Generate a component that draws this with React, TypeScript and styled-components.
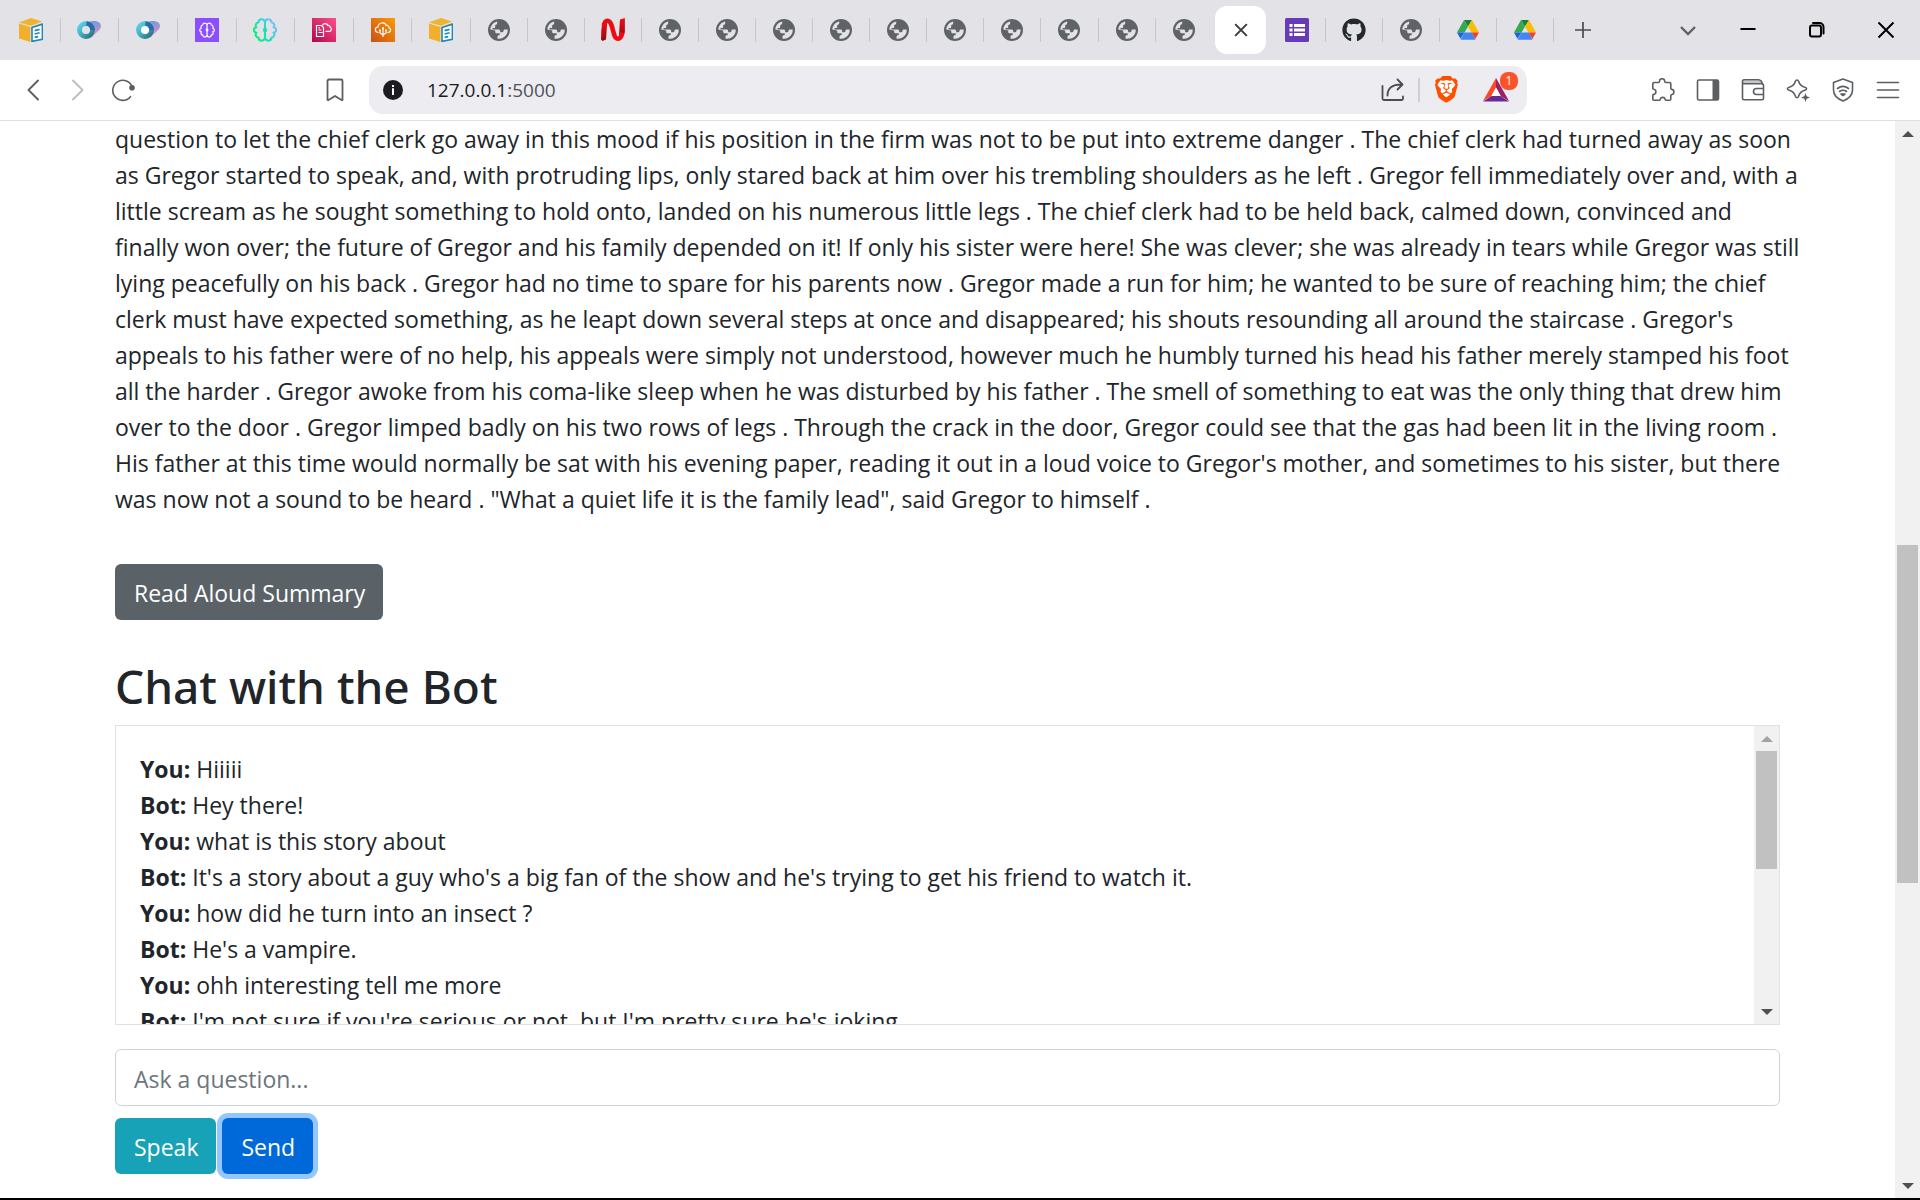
import React from "react";
import styled, { createGlobalStyle } from "styled-components";
import { FaGithub } from "react-icons/fa";
import { SiBrave } from "react-icons/si";

const GlobalStyle = createGlobalStyle`
  *, *::before, *::after { box-sizing: border-box; }
  body {
    margin: 0;
    background: #fff;
    color: #212529;
    font-family: "Segoe UI", "Open Sans", "Noto Sans", sans-serif;
    font-size: 23px;
    line-height: 36px;
  }
  button, input { font: inherit; }
`;

const Window = styled.div`
  display: flex;
  flex-direction: column;
  height: 100vh;
  overflow: hidden;
  border-bottom: 2px solid #000;
`;

/* ---------- tab strip ---------- */

const TabStrip = styled.header`
  display: flex;
  flex: none;
  align-items: center;
  height: 60px;
  padding: 0 0 0 2px;
  background: #e3e2e7;
`;

const PinnedTabs = styled.div`
  display: flex;
  flex: 0 1 469px;
`;

const OpenTabs = styled.div`
  display: flex;
  flex: 0 1 1083px;
`;

const Tab = styled.button<{ $divider?: boolean }>`
  display: flex;
  flex: 1;
  align-items: center;
  justify-content: center;
  height: 24px;
  padding: 0;
  border: 0;
  border-right: 1px solid ${(p) => (p.$divider ? "#c6c6cb" : "transparent")};
  background: none;
`;

const ActiveTab = styled.div`
  display: flex;
  flex: 1;
  justify-content: center;
  margin: -12px 0;
`;

const ActiveTabButton = styled.button`
  display: flex;
  align-items: center;
  justify-content: center;
  width: 51px;
  height: 48px;
  padding: 0;
  border: 0;
  border-radius: 12px;
  background: #fff;
  color: #3b3d42;
`;

const StripButton = styled.button`
  display: flex;
  align-items: center;
  justify-content: center;
  width: 58px;
  height: 48px;
  padding: 0;
  border: 0;
  background: none;
  color: #4b4d52;
`;

const WindowControls = styled.div`
  display: flex;
  margin-left: auto;
`;

const ControlButton = styled(StripButton)<{ $dim?: boolean }>`
  width: ${(p) => (p.$dim ? "51px" : "69px")};
  color: ${(p) => (p.$dim ? "#606268" : "#000")};
`;

/* ---------- toolbar ---------- */

const Toolbar = styled.nav`
  display: grid;
  flex: none;
  grid-template-columns: 369px minmax(0, 1fr) 393px;
  align-items: center;
  height: 61px;
  border-bottom: 1px solid #dfdfe3;
  background: #fff;
`;

const ToolGroup = styled.div<{ $end?: boolean }>`
  display: flex;
  justify-content: ${(p) => (p.$end ? "flex-end" : "flex-start")};
  padding: 0 ${(p) => (p.$end ? "10px" : "12px")} 0 10px;
`;

const ToolButton = styled.button<{ $faded?: boolean; $push?: boolean }>`
  display: flex;
  align-items: center;
  justify-content: center;
  width: 45px;
  height: 45px;
  margin-left: ${(p) => (p.$push ? "auto" : "0")};
  padding: 0;
  border: 0;
  background: none;
  color: ${(p) => (p.$faded ? "#bcbdc0" : "#5b5e63")};
`;

const AddressBar = styled.div`
  display: flex;
  align-items: center;
  height: 48px;
  padding: 0 6px 0 14px;
  border-radius: 14px;
  background: #edecf1;
`;

const UrlText = styled.div`
  flex: 1;
  min-width: 0;
  padding-left: 24px;
  color: #1b1b20;
  font-size: 19px;
  line-height: 28px;
`;

const Port = styled.span`
  color: #505258;
`;

const BarButton = styled.button<{ $wide?: boolean }>`
  position: relative;
  display: flex;
  align-items: center;
  justify-content: center;
  width: ${(p) => (p.$wide ? "48px" : "50px")};
  height: 48px;
  padding: 0;
  border: 0;
  background: none;
  color: #4a4c51;
`;

const BarDivider = styled.span`
  width: 2px;
  height: 24px;
  margin-right: 3px;
  background: #cfced4;
`;

const RewardBadge = styled.span`
  position: absolute;
  top: 6px;
  right: 3px;
  width: 18px;
  height: 18px;
  border-radius: 8px;
  background: #fb542b;
  color: #fff;
  font-size: 12px;
  line-height: 18px;
  text-align: center;
`;

/* ---------- page ---------- */

const Viewport = styled.div`
  display: flex;
  flex: 1;
  min-height: 0;
`;

const Page = styled.main`
  flex: 1;
  min-width: 0;
  overflow: hidden;
  padding: 0 24px;
`;

const Container = styled.div`
  max-width: 1665px;
  margin: 0 auto;
`;

const Summary = styled.p`
  margin: 0 0 47px;
`;

const Line = styled.span`
  display: block;
  white-space: nowrap;
`;

const tones = {
  grey: "#5a6268",
  teal: "#17a2b8",
  blue: "#0069d9",
};

const Button = styled.button<{ $tone: keyof typeof tones; $focused?: boolean }>`
  height: 56px;
  padding: 2px 18px 0 19px;
  border: 0;
  border-radius: 6px;
  background: ${(p) => tones[p.$tone]};
  box-shadow: ${(p) => (p.$focused ? "0 0 0 5px #94c6ff" : "none")};
  color: #fff;
`;

const Heading = styled.h2`
  margin: 37px 0 10px;
  font-family: "Segoe UI", "Noto Sans", sans-serif;
  font-size: 46px;
  font-weight: 500;
  line-height: 58px;
`;

const ChatBox = styled.section`
  display: flex;
  height: 300px;
  margin-bottom: 24px;
  overflow: hidden;
  border: 1px solid #dee2e6;
`;

const Messages = styled.div`
  flex: 1;
  min-width: 0;
  padding: 25px 24px;
`;

const Message = styled.div`
  white-space: nowrap;
`;

const QuestionInput = styled.input`
  display: block;
  width: 100%;
  height: 57px;
  margin-bottom: 12px;
  padding: 2px 18px 0;
  border: 1px solid #ced4da;
  border-radius: 6px;
  background: #fff;
  color: #495057;

  &::placeholder {
    color: #6c757d;
    opacity: 1;
  }
`;

const Actions = styled.div`
  display: flex;
  gap: 6px;
`;

/* ---------- scroll bars ---------- */

const ScrollTrack = styled.div`
  display: flex;
  flex: none;
  flex-direction: column;
  width: 25px;
  background: #f1f1f1;
`;

const ScrollArrow = styled.span<{ $down?: boolean; $off?: boolean }>`
  display: flex;
  flex: none;
  align-items: center;
  justify-content: center;
  height: 25px;

  &::before {
    content: "";
    border: 6px solid transparent;
    border-width: ${(p) => (p.$down ? "6px 6px 0" : "0 6px 6px")};
    border-${(p) => (p.$down ? "top" : "bottom")}-color: ${(p) => (p.$off ? "#a3a3a3" : "#505050")};
  }
`;

const ScrollSpace = styled.span<{ $share: number }>`
  flex: ${(p) => p.$share} 0 0;
`;

const ScrollThumb = styled(ScrollSpace)`
  margin: 0 2px;
  background: #c1c1c1;
`;

function ScrollBar(props: { before: number; thumb: number; after: number }) {
  return (
    <ScrollTrack aria-hidden="true">
      <ScrollArrow $off={props.before === 0} />
      <ScrollSpace $share={props.before} />
      <ScrollThumb $share={props.thumb} />
      <ScrollSpace $share={props.after} />
      <ScrollArrow $down />
    </ScrollTrack>
  );
}

/* ---------- icons ---------- */

const Svg = (p: React.SVGProps<SVGSVGElement>) => (
  <svg width="24" height="24" viewBox="0 0 24 24" fill="none" aria-hidden="true" {...p} />
);

const stroke = {
  stroke: "currentColor",
  strokeWidth: 1.6,
  strokeLinecap: "round" as const,
  strokeLinejoin: "round" as const,
};

const BoxIcon = () => (
  <Svg>
    <path d="M0 4.5 12 0l11 3.6-11 4.2z" fill="#f0b42c" />
    <path d="M0 5.6 11.4 9v15L0 20.5z" fill="#f2b02a" />
    <path d="M12.6 9 23 5v6l-10.4 2z" fill="#e5a41f" />
    <path d="m13 9.6 10.4-3.4v15L13 23.4z" fill="#fff" stroke="#1b87c2" strokeWidth="1.6" />
    <path d="m15.6 12.6 5-1.2M15.6 16l5-1.2M15.6 19.4l3.6-.8" stroke="#1b87c2" strokeWidth="1.6" />
  </Svg>
);

const RingIcon = ({ id, center }: { id: string; center: string }) => (
  <Svg>
    <defs>
      <linearGradient id={`${id}a`} x1="0" y1="0" x2="0" y2="1">
        <stop offset="0" stopColor="#6f9fd8" />
        <stop offset=".5" stopColor="#b98fd0" />
        <stop offset="1" stopColor="#f0b9a8" />
      </linearGradient>
      <linearGradient id={`${id}b`} x1="0" y1="0" x2="1" y2="1">
        <stop offset="0" stopColor="#5bd3ea" />
        <stop offset=".45" stopColor="#45b0c4" />
        <stop offset="1" stopColor="#2a6f80" />
      </linearGradient>
    </defs>
    <path d="M11 4.5c4-2 9-1.800 11.500.300 2 1.800 1.900 5-.300 7.200L14 20z" fill={`url(#${id}a)`} />
    <circle cx="9" cy="12" r="6.5" stroke={`url(#${id}b)`} strokeWidth="5" fill={center} />
    <path d="M9.5 5.5a6.5 6.5 0 0 1 6 6.5" stroke="#2b6ba6" strokeWidth="4.6" />
  </Svg>
);

const brain =
  "M12 5C12.5 1.5 17.5 1.300 18 5C20.500 5.500 21 8 20 9.500C23 10.500 23 13.500 20 14.500C21 16 20.500 18.500 18 19C17.500 22.700 12.500 22.500 12 19C11.500 22.500 6.500 22.700 6 19C3.500 18.500 3 16 4 14.500C1 13.500 1 10.500 4 9.500C3 8 3.500 5.500 6 5C6.500 1.300 11.500 1.500 12 5zM12 5v14";

const BrainTileIcon = () => (
  <Svg>
    <rect width="24" height="24" fill="#8c4fff" />
    <g transform="translate(3.400 3.400) scale(.72)">
      <path d={brain} stroke="#fff" strokeWidth="1.7" />
      <circle cx="12" cy="12" r="2" fill="#fff" />
    </g>
  </Svg>
);

const BrainIcon = () => (
  <Svg>
    <defs>
      <linearGradient id="brain" x1="0" y1=".8" x2="1" y2=".2">
        <stop offset="0" stopColor="#06f26c" />
        <stop offset=".5" stopColor="#23dcc8" />
        <stop offset="1" stopColor="#7fbcff" />
      </linearGradient>
    </defs>
    <g transform="translate(-1.200 -1.200) scale(1.100)">
      <path d={brain} stroke="url(#brain)" strokeWidth="1.9" />
      <circle cx="12" cy="12" r="2" fill="#23dcb0" />
    </g>
  </Svg>
);

const CloudDocIcon = () => (
  <Svg>
    <defs>
      <linearGradient id="pink" x1="0" y1="1" x2="1" y2="0">
        <stop offset="0" stopColor="#b0084d" />
        <stop offset="1" stopColor="#ff4f8b" />
      </linearGradient>
    </defs>
    <rect width="24" height="24" fill="url(#pink)" />
    <path d="M4.500 7.500h5l2 2v9h-7zM6.500 12h3M6.500 14.500h4M6.500 9.800h1.500M10.500 7.300c.8-2.300 4.600-2.500 5.300.2 1.600-.3 2.500.7 2.400 1.800 1.800.8 1.400 4-.9 4h-3.800" stroke="#fff" strokeWidth="1.2" />
  </Svg>
);

const CloudTreeIcon = () => (
  <Svg>
    <defs>
      <linearGradient id="orange" x1="0" y1="1" x2="1" y2="0">
        <stop offset="0" stopColor="#c8511b" />
        <stop offset="1" stopColor="#ff9900" />
      </linearGradient>
    </defs>
    <rect width="24" height="24" fill="url(#orange)" />
    <path d="M7.500 14.500C3.300 14.400 3.500 9.200 7 9c.4-4.800 7-5.300 8.200-1.500 1.800-.5 2.800.7 2.700 2.200 2.600.8 2.200 4.800-1.400 4.800M12 19V10M12 17l-3-2v-2.500M12 17l3-2v-2.500" stroke="#fff" strokeWidth="1.2" />
    <circle cx="12" cy="10" r="1" fill="#fff" />
    <circle cx="9" cy="12.300" r="1" fill="#fff" />
    <circle cx="15" cy="12.300" r="1" fill="#fff" />
  </Svg>
);

const GlobeIcon = () => (
  <Svg>
    <circle cx="12" cy="12" r="11" fill="#5f6368" />
    <path d="M3.300 11.500C3.600 7.500 6.400 4.300 10.200 3.500V5c0 1.100-.8 2-2 2v2c0 .6-.4 1-1 1H5.500v1.500h6c1 0 1.700.7 1.700 1.700v1h2c.9 0 1.300-.6 1.300-1.400 0-.8.600-1.300 1.400-1.300h2.800a8.800 8.800 0 0 1-10.200 9.200v-2c0-.8.6-1.400 1.400-1.400.5 0 .8-.4.8-.9v-1.100H9.800c-.9 0-1.600-.7-1.600-1.600v-1.200z" fill="#e3e2e7" />
  </Svg>
);

const RibbonIcon = () => (
  <Svg>
    <defs>
      <linearGradient id="ribbon" x1="0" y1="0" x2="0" y2="1">
        <stop offset="0" stopColor="#f20d16" />
        <stop offset="1" stopColor="#8e0a12" />
      </linearGradient>
    </defs>
    <path d="M0 21.500c.6-6-.4-11 1.800-16l4.400-1L5 21.500 1.500 23z" fill="url(#ribbon)" />
    <path d="M19 1.500 23.900 0v14l-2.500 6-3.400-3z" fill="url(#ribbon)" />
    <path d="M2.800 8C4 1.300 8.600.8 10.800 8l2 7.500c1.600 6.800 6.800 7.500 8.600-1" stroke="#ee0b14" strokeWidth="4.6" />
  </Svg>
);

const FormsIcon = () => (
  <Svg>
    <rect width="24" height="24" rx="1.5" fill="#673ab7" />
    <path d="M4.500 6h3v3h-3zM9 6h11v3H9zM4.500 10.500h3v3h-3zM9 10.500h11v3H9zM4.500 15h3v3h-3zM9 15h11v3H9z" fill="#fff" />
  </Svg>
);

const DriveIcon = () => (
  <Svg>
    <path d="M8 2h8l-4 6.500z" fill="#188038" />
    <path d="M8 2 1 14.500h7.500L12 8.500z" fill="#34a853" />
    <path d="m16 2 7 12.500h-7.500L12 8.500z" fill="#fbbc04" />
    <path d="m1 14.500 3.500 6.300L8.500 14.500z" fill="#1967d2" />
    <path d="m4.500 21.700h15l-3.800-7.200H8.500z" fill="#4285f4" />
    <path d="M15.500 14.500H23l-3.700 6.500z" fill="#ea4335" />
  </Svg>
);

const CloseIcon = ({ size, weight }: { size: number; weight: number }) => (
  <Svg width={size} height={size}>
    <path d="m2 2 20 20M22 2 2 22" stroke="currentColor" strokeWidth={(weight * 24) / size} />
  </Svg>
);

const BraveIcon = () => (
  <Svg width="28" height="28">
    <path d="M5 4h14l2 5-3 10-6 4-6-4L3 9z" fill="#fff" />
    <SiBrave x="0" y="0" width="24" height="24" color="#ff5000" />
  </Svg>
);

const BatIcon = () => (
  <Svg width="28" height="26" viewBox="0 0 28 26">
    <path d="M14 1 1 24l8.500-5L14 10.500z" fill="#ff4724" />
    <path d="m14 1 13 23-8.500-5L14 10.500z" fill="#9e1f63" />
    <path d="M1 24.500h26L18.500 19h-9z" fill="#662d91" />
    <path d="M14 10.500 9.300 19h9.400z" fill="#fff" />
  </Svg>
);

/* ---------- content ---------- */

const pinned = [
  <BoxIcon />,
  <RingIcon id="r1" center="#e3e2e7" />,
  <RingIcon id="r2" center="#fff" />,
  <BrainTileIcon />,
  <BrainIcon />,
  <CloudDocIcon />,
  <CloudTreeIcon />,
  <BoxIcon />,
];

const beforeActive = Array.from({ length: 13 }, (_, i) => (i === 2 ? <RibbonIcon /> : <GlobeIcon />));
const afterActive = [
  <FormsIcon />,
  <FaGithub size={24} color="#24292e" />,
  <GlobeIcon />,
  <DriveIcon />,
  <DriveIcon />,
];

const summary = [
  "question to let the chief clerk go away in this mood if his position in the firm was not to be put into extreme danger . The chief clerk had turned away as soon",
  "as Gregor started to speak, and, with protruding lips, only stared back at him over his trembling shoulders as he left . Gregor fell immediately over and, with a",
  "little scream as he sought something to hold onto, landed on his numerous little legs . The chief clerk had to be held back, calmed down, convinced and",
  "finally won over; the future of Gregor and his family depended on it! If only his sister were here! She was clever; she was already in tears while Gregor was still",
  "lying peacefully on his back . Gregor had no time to spare for his parents now . Gregor made a run for him; he wanted to be sure of reaching him; the chief",
  "clerk must have expected something, as he leapt down several steps at once and disappeared; his shouts resounding all around the staircase . Gregor's",
  "appeals to his father were of no help, his appeals were simply not understood, however much he humbly turned his head his father merely stamped his foot",
  "all the harder . Gregor awoke from his coma-like sleep when he was disturbed by his father . The smell of something to eat was the only thing that drew him",
  "over to the door . Gregor limped badly on his two rows of legs . Through the crack in the door, Gregor could see that the gas had been lit in the living room .",
  "His father at this time would normally be sat with his evening paper, reading it out in a loud voice to Gregor's mother, and sometimes to his sister, but there",
  "was now not a sound to be heard . \"What a quiet life it is the family lead\", said Gregor to himself .",
];

const messages = [
  ["You", "Hiiiii"],
  ["Bot", "Hey there!"],
  ["You", "what is this story about"],
  ["Bot", "It's a story about a guy who's a big fan of the show and he's trying to get his friend to watch it."],
  ["You", "how did he turn into an insect ?"],
  ["Bot", "He's a vampire."],
  ["You", "ohh interesting tell me more"],
  ["Bot", "I'm not sure if you're serious or not, but I'm pretty sure he's joking."],
];

function BrowserTabs() {
  return (
    <TabStrip>
      <PinnedTabs>
        {pinned.map((icon, i) => (
          <Tab key={i} $divider aria-label={`Pinned tab ${i + 1}`}>{icon}</Tab>
        ))}
      </PinnedTabs>
      <OpenTabs>
        {beforeActive.map((icon, i) => (
          <Tab key={i} $divider={i < 12} aria-label={`Tab ${i + 1}`}>{icon}</Tab>
        ))}
        <ActiveTab>
          <ActiveTabButton aria-label="Close tab"><CloseIcon size={14} weight={2} /></ActiveTabButton>
        </ActiveTab>
        {afterActive.map((icon, i) => (
          <Tab key={i} $divider aria-label={`Tab ${i + 15}`}>{icon}</Tab>
        ))}
      </OpenTabs>
      <StripButton aria-label="New tab">
        <Svg><path d="M12 4v16M4 12h16" stroke="currentColor" strokeWidth="1.7" /></Svg>
      </StripButton>
      <WindowControls>
        <ControlButton $dim aria-label="Search tabs">
          <Svg><path d="m5 9 7 7 7-7" stroke="currentColor" strokeWidth="2.4" /></Svg>
        </ControlButton>
        <ControlButton aria-label="Minimize">
          <Svg><path d="M4.500 11h15" stroke="currentColor" strokeWidth="2" /></Svg>
        </ControlButton>
        <ControlButton aria-label="Restore">
          <Svg>
            <rect x="5" y="7.5" width="11" height="11" rx="2" {...stroke} strokeWidth="2" />
            <path d="M8 5h6.500a4 4 0 0 1 4 4v6.500" {...stroke} strokeWidth="2" />
          </Svg>
        </ControlButton>
        <ControlButton aria-label="Close"><CloseIcon size={18} weight={2} /></ControlButton>
      </WindowControls>
    </TabStrip>
  );
}

function BrowserToolbar() {
  return (
    <Toolbar>
      <ToolGroup>
        <ToolButton aria-label="Back">
          <Svg><path d="M17 2.500 7.500 12l9.500 9.500" {...stroke} strokeWidth="1.9" /></Svg>
        </ToolButton>
        <ToolButton $faded aria-label="Forward">
          <Svg><path d="m7 2.500 9.500 9.500L7 21.500" {...stroke} strokeWidth="1.9" /></Svg>
        </ToolButton>
        <ToolButton aria-label="Reload">
          <Svg>
            <path d="M21.500 10A10 10 0 1 0 19.500 18.700" {...stroke} />
            <circle cx="21" cy="9.8" r="2.8" fill="currentColor" />
          </Svg>
        </ToolButton>
        <ToolButton $push aria-label="Bookmark this tab">
          <Svg><path d="M4.500 22V3a1.500 1.500 0 0 1 1.500-1.500h12A1.500 1.500 0 0 1 19.500 3v19l-.6.300L12 18l-6.900 4.300z" {...stroke} strokeWidth="1.8" /></Svg>
        </ToolButton>
      </ToolGroup>
      <AddressBar>
        <Svg width="20" height="20">
          <circle cx="12" cy="12" r="12" fill="#1b1b20" />
          <path d="M10.800 6h2.400v2.400h-2.400zM10.800 10h2.400v8h-2.400z" fill="#fff" />
        </Svg>
        <UrlText>127.0.0.1<Port>:5000</Port></UrlText>
        <BarButton aria-label="Share">
          <Svg><path d="M1.500 8v12.500A1.500 1.500 0 0 0 3 22h17.500a1.500 1.500 0 0 0 1.500-1.500v-2M6.500 17.500C6.500 10 11 6.500 20.500 6.500M16.500 1.500l5 5-5 5" {...stroke} strokeWidth="1.8" /></Svg>
        </BarButton>
        <BarDivider />
        <BarButton $wide aria-label="Brave Shields"><BraveIcon /></BarButton>
        <BarButton aria-label="Brave Rewards">
          <BatIcon />
          <RewardBadge>1</RewardBadge>
        </BarButton>
      </AddressBar>
      <ToolGroup $end>
        <ToolButton aria-label="Extensions">
          <Svg><path d="M3 4.500h4.500c.8 0 1-.5 1-1.200a2.600 2.600 0 0 1 5.200 0c0 .7.300 1.200 1 1.200h3.800a1.300 1.300 0 0 1 1.300 1.300v4.500c0 .7.400 1 1 1.100a2.600 2.600 0 0 1 0 5.100c-.6.100-1 .5-1 1.200V21a1.300 1.300 0 0 1-1.300 1.300h-3.300c-.7 0-.9-.4-1-1a2.600 2.600 0 0 0-5 0c-.1.600-.4 1-1 1H3A1.300 1.300 0 0 1 1.800 21v-3.500c0-.7.400-1 1-1.100a2.600 2.600 0 0 0 0-5.100c-.6-.1-1-.4-1-1.100V5.800A1.300 1.300 0 0 1 3 4.500z" {...stroke} /></Svg>
        </ToolButton>
        <ToolButton aria-label="Sidebar">
          <Svg>
            <rect x="1.5" y="2" width="21" height="20" rx="1.5" {...stroke} />
            <path d="M16.500 2H22v20h-5.500z" fill="currentColor" />
          </Svg>
        </ToolButton>
        <ToolButton aria-label="Wallet">
          <Svg>
            <path d="M1.500 2.500h18L22 6H1.500z" fill="#c5c6c8" />
            <path d="M1.500 6V3A1.500 1.500 0 0 1 3 1.800h14.500C20 2 21 4 21.500 6M1.500 5.800h19.500a1.500 1.500 0 0 1 1.500 1.500v12.900a1.500 1.500 0 0 1-1.500 1.500H3a1.500 1.500 0 0 1-1.500-1.500zM22.500 10.500h-7a3 3 0 0 0-3 3 3 3 0 0 0 3 3h7" {...stroke} />
          </Svg>
        </ToolButton>
        <ToolButton aria-label="Leo AI">
          <Svg>
            <path d="M11 2c.8 0 1.300.5 1.600 1.300 1 3.500 2.200 4.900 6.200 6 2.400.7 2.400 2.300 0 3-4 1.100-5.200 2.500-6.200 6-.6 1.900-2.600 1.900-3.200 0-1-3.500-2.200-4.900-6.200-6-2.400-.7-2.400-2.300 0-3 4-1.100 5.200-2.500 6.200-6C9.700 2.500 10.200 2 11 2z" {...stroke} />
            <path d="m19.500 15 1.200 3.300 3.300 1.200-3.300 1.200-1.200 3.300-1.200-3.300-3.300-1.200 3.300-1.200z" fill="currentColor" />
          </Svg>
        </ToolButton>
        <ToolButton aria-label="VPN">
          <Svg>
            <path d="M12 1 21.500 4.500V12c0 5.500-4.500 9-9.500 11-5-2-9.500-5.500-9.500-11V4.500zM6.500 10.500c3.300-2.600 7.700-2.600 11 0M8.500 13.500c2.200-1.600 4.800-1.600 7 0" {...stroke} />
            <path d="M10 16h4l-2 1.500z" {...stroke} />
          </Svg>
        </ToolButton>
        <ToolButton aria-label="Menu">
          <Svg><path d="M1.500 4.500h21M1.500 12h21M1.500 19.500h21" {...stroke} /></Svg>
        </ToolButton>
      </ToolGroup>
    </Toolbar>
  );
}

export default function App() {
  return (
    <Window>
      <GlobalStyle />
      <BrowserTabs />
      <BrowserToolbar />
      <Viewport>
        <Page>
          <Container>
            <Summary>
              {summary.map((line) => (
                <Line key={line}>{line}</Line>
              ))}
            </Summary>
            <Button $tone="grey">Read Aloud Summary</Button>
            <Heading>Chat with the Bot</Heading>
            <ChatBox aria-label="Chat">
              <Messages>
                {messages.map(([who, text]) => (
                  <Message key={text}>
                    <strong>{who}:</strong> {text}
                  </Message>
                ))}
              </Messages>
              <ScrollBar before={0} thumb={118} after={130} />
            </ChatBox>
            <QuestionInput type="text" aria-label="Ask a question" placeholder="Ask a question..." />
            <Actions>
              <Button $tone="teal">Speak</Button>
              <Button $tone="blue" $focused>Send</Button>
            </Actions>
          </Container>
        </Page>
        <ScrollBar before={399} thumb={337} after={290} />
      </Viewport>
    </Window>
  );
}
